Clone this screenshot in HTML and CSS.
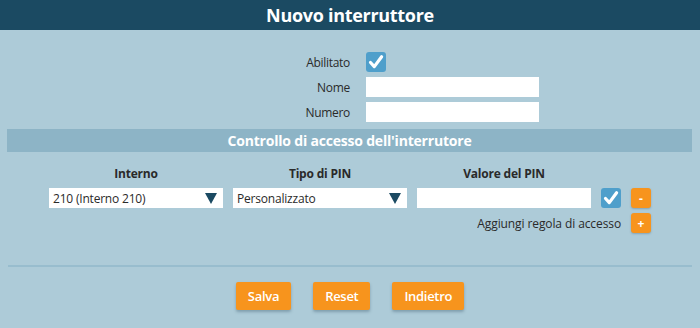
FILE: index.html
```html
<!DOCTYPE html>
<html lang="it">
<head>
<meta charset="utf-8">
<title>Nuovo interruttore</title>
<link rel="stylesheet" href="styles.css">
</head>
<body>
<div class="page">
  <header class="topbar"><h1>Nuovo interruttore</h1></header>

  <div class="form-grid">
    <label class="lbl">Abilitato</label>
    <span class="check"><svg viewBox="0 0 20 20" width="20" height="20"><path d="M4.5 10.5 L8.3 14.6 L15.6 4.8" fill="none" stroke="#fff" stroke-width="3.2" stroke-linecap="round" stroke-linejoin="round"/></svg></span>
    <label class="lbl">Nome</label>
    <input class="field" type="text">
    <label class="lbl">Numero</label>
    <input class="field" type="text">
  </div>

  <div class="section-bar">Controllo di accesso dell'interrutore</div>

  <div class="rules">
    <div class="col-head">Interno</div>
    <div class="col-head">Tipo di PIN</div>
    <div class="col-head">Valore del PIN</div>
    <div></div>
    <div></div>

    <div class="select"><span>210 (Interno 210)</span><svg class="arrow" viewBox="0 0 12 12" width="12" height="12"><path d="M0 1 H12 L6 12 Z" fill="#1b4a62"/></svg></div>
    <div class="select"><span>Personalizzato</span><svg class="arrow" viewBox="0 0 12 12" width="12" height="12"><path d="M0 1 H12 L6 12 Z" fill="#1b4a62"/></svg></div>
    <input class="field wide" type="text">
    <span class="check"><svg viewBox="0 0 20 20" width="20" height="20"><path d="M4.5 10.5 L8.3 14.6 L15.6 4.8" fill="none" stroke="#fff" stroke-width="3.2" stroke-linecap="round" stroke-linejoin="round"/></svg></span>
    <button class="mini">-</button>

    <div class="add-text">Aggiungi regola di accesso</div>
    <button class="mini">+</button>
  </div>

  <hr class="sep">

  <div class="actions">
    <button class="btn">Salva</button>
    <button class="btn">Reset</button>
    <button class="btn">Indietro</button>
  </div>
</div>
</body>
</html>
```

FILE: styles.css
```css
* { box-sizing: border-box; }
html, body {
  margin: 0;
  padding: 0;
  background: #adcbd8;
  font-family: "Open Sans", "Noto Sans", sans-serif;
  color: #2a2a2a;
}
.page {
  width: 700px;
  height: 328px;
  background: #adcbd8;
  overflow: hidden;
}
.topbar {
  height: 30px;
  background: #1b4a62;
  display: flex;
  align-items: center;
  justify-content: center;
}
.topbar h1 {
  margin: 0;
  color: #fff;
  font-size: 18px;
  font-weight: 700;
  letter-spacing: -0.3px;
}
.form-grid {
  display: grid;
  grid-template-columns: 350px 173px;
  column-gap: 16px;
  row-gap: 5px;
  padding-top: 22px;
  align-items: center;
}
.lbl {
  text-align: right;
  font-size: 12px;
  letter-spacing: -0.3px;
}
.check {
  width: 20px;
  height: 20px;
  background: #4f9fcb;
  border-radius: 3px;
  display: block;
}
.check svg { display: block; }
.field {
  height: 20px;
  width: 173px;
  border: none;
  background: #fff;
  margin: 0;
  padding: 0 4px;
  display: block;
  outline: none;
}
.section-bar {
  margin: 7px 8px 0 7px;
  height: 23px;
  background: #8db4c6;
  color: #fff;
  font-weight: 700;
  font-size: 14px;
  display: flex;
  align-items: center;
  justify-content: center;
  letter-spacing: -0.2px;
}
.rules {
  display: grid;
  grid-template-columns: 174px 174px 174px 20px 20px;
  column-gap: 10px;
  justify-content: center;
  align-items: center;
  margin-top: 14px;
}
.col-head {
  text-align: center;
  font-weight: 700;
  font-size: 12px;
  letter-spacing: -0.2px;
  height: 16px;
  line-height: 16px;
  margin-bottom: 6px;
}
.select {
  height: 20px;
  background: #fff;
  display: flex;
  align-items: center;
  justify-content: space-between;
  padding: 0 6px 0 4px;
  font-size: 12px;
  letter-spacing: -0.2px;
}
.select .arrow { display: block; }
.field.wide { width: 174px; }
.mini {
  width: 20px;
  height: 20px;
  border: none;
  border-radius: 3px;
  background: #f7941d;
  color: #fff;
  font-weight: 700;
  font-size: 12px;
  padding: 0;
  font-family: inherit;
  box-shadow: 0 1px 2px rgba(60, 90, 110, 0.35);
}
.add-text {
  grid-column: 1 / span 4;
  text-align: right;
  font-size: 12px;
  letter-spacing: -0.1px;
  margin-top: 5px;
}
.rules .add-text + .mini { margin-top: 5px; }
.sep {
  margin: 32px 8px 0 8px;
  border: none;
  height: 2px;
  background: #98bdce;
}
.actions {
  display: flex;
  justify-content: center;
  gap: 22px;
  margin-top: 15px;
}
.btn {
  height: 28px;
  padding: 0 12px;
  border: none;
  border-radius: 2px;
  background: #f7941d;
  color: #fff;
  font-family: inherit;
  font-size: 13px;
  font-weight: 600;
  letter-spacing: -0.3px;
  box-shadow: 0 2px 3px rgba(60, 90, 110, 0.4);
}
```
